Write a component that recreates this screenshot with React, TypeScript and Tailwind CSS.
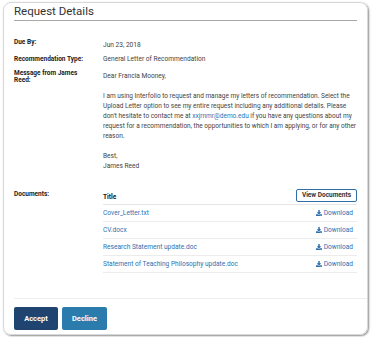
import { FaDownload } from 'react-icons/fa';

const docs = [
  'Cover_Letter.txt',
  'CV.docx',
  'Research Statement update.doc',
  'Statement of Teaching Philosophy update.doc',
];

function Row({ label, children }: { label: React.ReactNode; children: React.ReactNode }) {
  return (
    <div className="flex">
      <div className="w-[89px] shrink-0 pr-2 text-[6.5px] font-bold leading-[7px] text-[#222]">{label}</div>
      <div className="flex-1 min-w-0 text-[#444]">{children}</div>
    </div>
  );
}

export default function App() {
  return (
    <div
      className="w-[371px] h-[337px] bg-white pt-[2px] px-[3px]"
      style={{ fontFamily: 'Roboto, "Liberation Sans", sans-serif' }}
    >
      <div className="h-[333px] rounded-[8px] border border-[#d8d8d8] shadow-[1px_1px_2px_rgba(0,0,0,0.45)] flex flex-col">
        <div className="mx-[10px] pt-[1px] border-b border-[#a8a8a8] h-[18px]">
          <h1 className="text-[11.5px] leading-[14px] text-[#333] font-normal">Request Details</h1>
        </div>

        <div className="flex-1 mx-[10px] pt-[17px] text-[6.6px] leading-[10px] flex flex-col">
          <Row label={<span className="block pt-[1px]">Due By:</span>}>
            <p className="pt-[2px]">Jun 23, 2018</p>
          </Row>
          <div className="h-[4px]" />
          <Row label={<span className="block pt-[1.5px]">Recommendation Type:</span>}>
            <p>General Letter of Recommendation</p>
          </Row>
          <div className="h-[6px]" />
          <Row label={<span className="block">Message from James Reed:</span>}>
            <div>
              <p className="pt-[1px]">Dear Francia Mooney,</p>
              <p className="mt-[10px] text-[6.5px]">
                I am using Interfolio to request and manage my letters of recommendation. Select the Upload
                Letter option to see my entire request including any additional details. Please don't hesitate
                to contact me at <span className="text-[#2a74b5]">xxjrnmr@demo.edu</span> if you have any
                questions about my request for a recommendation, the opportunities to which I am applying, or
                for any other reason.
              </p>
              <p className="mt-[10px]">
                Best,
                <br />
                James Reed
              </p>
            </div>
          </Row>
          <div className="h-[17px]" />
          <Row label={<span className="block pt-[3px]">Documents:</span>}>
            <div>
              <div className="flex items-center justify-between h-[17px] border-b border-[#e6e6e6] pb-[1px]">
                <span className="font-bold text-[#222] pt-[3px]">Title</span>
                <button className="h-[13px] px-[5px] rounded-[2px] border border-[#2d6fa6] text-[6.5px] font-bold leading-none text-[#333] bg-white">
                  View Documents
                </button>
              </div>
              {docs.map((d) => (
                <div
                  key={d}
                  className="flex items-center justify-between h-[17px] border-b border-[#ececec] text-[#2f6fae]"
                >
                  <span>{d}</span>
                  <span className="flex items-center gap-[2px] pr-[4px]">
                    <FaDownload className="w-[6px] h-[6px]" />
                    Download
                  </span>
                </div>
              ))}
            </div>
          </Row>
        </div>

        <div className="ml-[10px] border-t border-[#ededed] pt-[8px] pb-[4px] flex gap-[4px]">
          <button className="w-[44px] h-[23px] rounded-[2px] bg-[#1e446f] text-white text-[7.5px] font-bold">
            Accept
          </button>
          <button className="w-[45px] h-[23px] rounded-[2px] bg-[#2b7bac] text-white text-[7.5px] font-bold">
            Decline
          </button>
        </div>
      </div>
    </div>
  );
}
